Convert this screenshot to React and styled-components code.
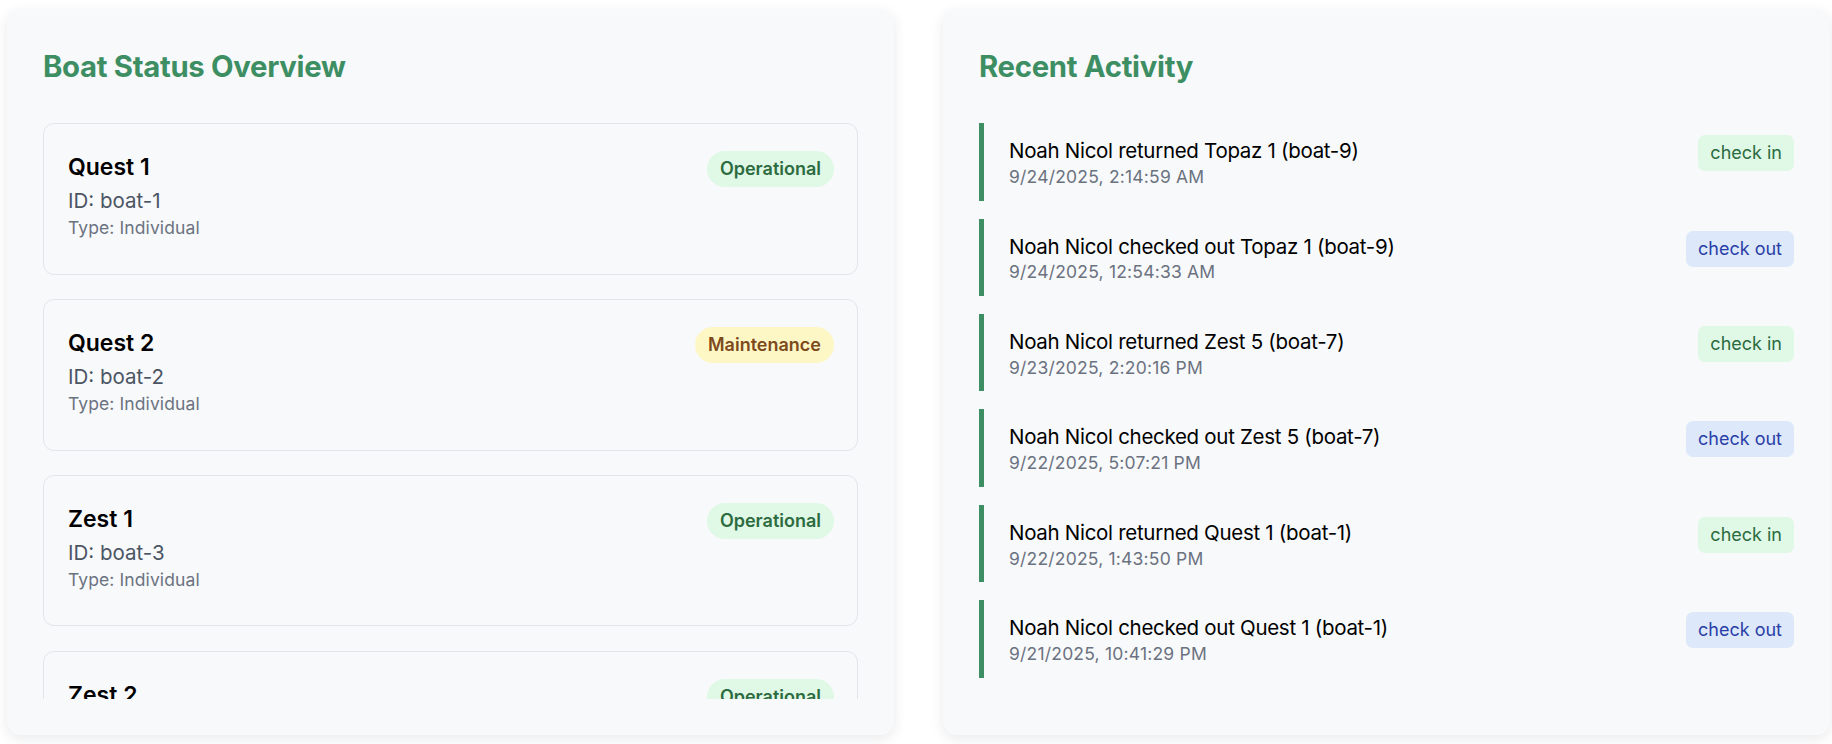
import React from "react";
import styled, { createGlobalStyle } from "styled-components";

const GlobalStyle = createGlobalStyle`
  html, body {
    margin: 0;
    padding: 0;
    background: #ffffff;
    font-family: Inter, "Noto Sans", "Liberation Sans", sans-serif;
    color: #111111;
  }
  * {
    box-sizing: border-box;
  }
`;

const Page = styled.main`
  display: grid;
  grid-template-columns: 1fr 1fr;
  gap: 49px;
  padding: 9px 2px 9px 7px;
  height: 744px;
`;

const Panel = styled.section`
  display: flex;
  flex-direction: column;
  min-height: 0;
  background: #f8f9fb;
  border-radius: 14px;
  box-shadow: 0 4px 14px rgba(15, 23, 42, 0.09);
  padding: 40px 36px 36px 36px;
`;

const PanelTitle = styled.h2`
  margin: 0 0 39px 0;
  font-size: 29.3px;
  line-height: 1.2;
  font-weight: 700;
  letter-spacing: -0.3px;
  color: #3d8f63;
`;

const ScrollList = styled.div`
  flex: 1;
  min-height: 0;
  overflow-y: auto;
  display: flex;
  flex-direction: column;
  gap: ${(p) => p.$gap}px;
  scrollbar-width: none;
  &::-webkit-scrollbar {
    display: none;
  }
`;

const BoatCard = styled.article`
  flex-shrink: 0;
  display: flex;
  justify-content: space-between;
  align-items: flex-start;
  border: 1px solid #e2e5ea;
  border-radius: 11px;
  padding: 27px 23px 33px 24px;
`;

const BoatInfo = styled.div`
  display: flex;
  flex-direction: column;
`;

const BoatName = styled.h3`
  margin: 0;
  font-size: 23px;
  line-height: 1.4;
  font-weight: 600;
  color: #000000;
`;

const BoatId = styled.div`
  margin-top: 4px;
  font-size: 20.5px;
  line-height: 1.4;
  color: #4b5563;
`;

const BoatType = styled.div`
  font-size: 17.5px;
  line-height: 1.4;
  letter-spacing: 0.1px;
  color: #6b7280;
`;

const statusColors = {
  Operational: { bg: "#e0f8e6", fg: "#2c6b3f" },
  Maintenance: { bg: "#fdf7c6", fg: "#7d4a1b" },
};

const StatusPill = styled.span`
  flex-shrink: 0;
  height: 36px;
  line-height: 36px;
  padding: 0 13px;
  border-radius: 999px;
  font-size: 18px;
  font-weight: 600;
  background: ${(p) => statusColors[p.$status].bg};
  color: ${(p) => statusColors[p.$status].fg};
`;

const ActivityItem = styled.div`
  flex-shrink: 0;
  display: flex;
  justify-content: space-between;
  align-items: flex-start;
  border-left: 5px solid #3d8f63;
  padding: 14px 0 12px 25px;
`;

const ActivityText = styled.div`
  display: flex;
  flex-direction: column;
`;

const ActivityLine = styled.div`
  font-size: 20.5px;
  line-height: 1.4;
  color: #000000;
  letter-spacing: -0.3px;
`;

const ActivityDate = styled.div`
  font-size: 17.5px;
  line-height: 1.3;
  letter-spacing: 0.2px;
  color: #6b7280;
`;

const actionColors = {
  "check in": { bg: "#e0f8e6", fg: "#2c6b3f" },
  "check out": { bg: "#dde8fb", fg: "#2a3fa6" },
};

const ActionTag = styled.span`
  flex-shrink: 0;
  margin-top: -2px;
  height: 36px;
  line-height: 36px;
  padding: 0 12px;
  border-radius: 7px;
  font-size: 18px;
  background: ${(p) => actionColors[p.$action].bg};
  color: ${(p) => actionColors[p.$action].fg};
`;

const boats = [
  { name: "Quest 1", id: "boat-1", type: "Individual", status: "Operational" },
  { name: "Quest 2", id: "boat-2", type: "Individual", status: "Maintenance" },
  { name: "Zest 1", id: "boat-3", type: "Individual", status: "Operational" },
  { name: "Zest 2", id: "boat-4", type: "Individual", status: "Operational" },
  { name: "Zest 3", id: "boat-5", type: "Individual", status: "Operational" },
];

const activity = [
  { text: "Noah Nicol returned Topaz 1 (boat-9)", date: "9/24/2025, 2:14:59 AM", action: "check in" },
  { text: "Noah Nicol checked out Topaz 1 (boat-9)", date: "9/24/2025, 12:54:33 AM", action: "check out" },
  { text: "Noah Nicol returned Zest 5 (boat-7)", date: "9/23/2025, 2:20:16 PM", action: "check in" },
  { text: "Noah Nicol checked out Zest 5 (boat-7)", date: "9/22/2025, 5:07:21 PM", action: "check out" },
  { text: "Noah Nicol returned Quest 1 (boat-1)", date: "9/22/2025, 1:43:50 PM", action: "check in" },
  { text: "Noah Nicol checked out Quest 1 (boat-1)", date: "9/21/2025, 10:41:29 PM", action: "check out" },
];

export default function App() {
  return (
    <>
      <GlobalStyle />
      <Page>
        <Panel>
          <PanelTitle>Boat Status Overview</PanelTitle>
          <ScrollList $gap={24.6}>
            {boats.map((b) => (
              <BoatCard key={b.id}>
                <BoatInfo>
                  <BoatName>{b.name}</BoatName>
                  <BoatId>ID: {b.id}</BoatId>
                  <BoatType>Type: {b.type}</BoatType>
                </BoatInfo>
                <StatusPill $status={b.status}>{b.status}</StatusPill>
              </BoatCard>
            ))}
          </ScrollList>
        </Panel>

        <Panel>
          <PanelTitle>Recent Activity</PanelTitle>
          <ScrollList $gap={18}>
            {activity.map((a, i) => (
              <ActivityItem key={i}>
                <ActivityText>
                  <ActivityLine>{a.text}</ActivityLine>
                  <ActivityDate>{a.date}</ActivityDate>
                </ActivityText>
                <ActionTag $action={a.action}>{a.action}</ActionTag>
              </ActivityItem>
            ))}
          </ScrollList>
        </Panel>
      </Page>
    </>
  );
}
